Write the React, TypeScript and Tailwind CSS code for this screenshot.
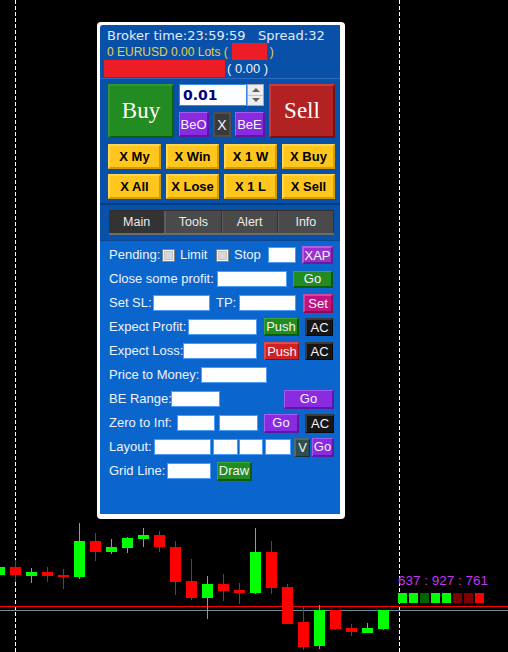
import React from "react";

type Candle = [number, number, number, number, number, "r" | "g"];

// body left, body top, body bottom, wick top, wick bottom, colour
const candles: Candle[] = [
  [-6, 567, 575, 560, 582, "g"],
  [10, 567, 575, 560, 582, "r"],
  [26, 572, 576, 568, 583, "g"],
  [42, 572, 576, 567, 582, "r"],
  [58, 575, 577, 569, 589, "r"],
  [74, 541, 577, 523, 579, "g"],
  [90, 541, 552, 533, 561, "r"],
  [106, 547, 552, 539, 554, "g"],
  [122, 538, 548, 537, 553, "g"],
  [138, 535, 539, 528, 547, "g"],
  [154, 535, 547, 531, 552, "r"],
  [170, 547, 582, 541, 595, "r"],
  [186, 581, 598, 559, 600, "r"],
  [202, 584, 598, 576, 619, "g"],
  [218, 584, 591, 574, 601, "r"],
  [234, 590, 593, 583, 604, "r"],
  [250, 552, 593, 528, 594, "g"],
  [266, 552, 588, 541, 594, "r"],
  [282, 587, 624, 584, 624, "r"],
  [298, 622, 647, 607, 650, "r"],
  [314, 610, 646, 605, 649, "g"],
  [330, 610, 629, 610, 630, "r"],
  [346, 628, 632, 624, 636, "r"],
  [362, 628, 633, 623, 633, "g"],
  [378, 610, 629, 610, 630, "g"],
];

const squares = ["#00ff00", "#00ff00", "#006400", "#00ff00", "#00ff00", "#800000", "#800000", "#ff0000"];

const Chart = () => (
  <svg className="absolute inset-0" width="508" height="652" viewBox="0 0 508 652">
    <line x1="15.5" y1="0" x2="15.5" y2="652" stroke="#fff" strokeDasharray="4 2" />
    <line x1="399.5" y1="0" x2="399.5" y2="652" stroke="#fff" strokeDasharray="4 2" />
    <line x1="0" y1="606.5" x2="508" y2="606.5" stroke="#ff0000" />
    <line x1="0" y1="610.5" x2="508" y2="610.5" stroke="#778899" />
    {candles.map(([x, bt, bb, wt, wb, c], i) => {
      const col = c === "g" ? "#00ff00" : "#ff0000";
      return (
        <g key={i}>
          <rect x={x + 5} y={wt} width="1" height={wb - wt} fill={col} />
          <rect x={x} y={bt} width="11" height={Math.max(bb - bt, 2)} fill={col} />
        </g>
      );
    })}
    {squares.map((c, i) => (
      <rect key={i} x={398 + i * 11} y="593" width="9" height="10" fill={c} />
    ))}
  </svg>
);

const Field = ({ w }: { w: string }) => (
  <div className={`h-[16px] shrink-0 bg-white border border-[#4d9cf6] ${w}`} />
);

const CheckBox = () => (
  <div className="w-[13px] h-[13px] shrink-0 border border-[#808080] bg-[#f4f4f4] p-[1px]">
    <div className="w-full h-full bg-[#d8d8d8] border border-[#c4c4c4]" />
  </div>
);

const green =
  "bg-[#228b22] border-t border-l border-t-[#3aa53a] border-l-[#3aa53a] border-b-2 border-r-2 border-b-[#0c5c0c] border-r-[#0c5c0c]";
const purple =
  "bg-[#8a2be2] border-t border-l border-t-[#a45cf0] border-l-[#a45cf0] border-b-2 border-r-2 border-b-[#5c18a0] border-r-[#5c18a0]";
const orchid =
  "bg-[#9932cc] border-t-2 border-l-2 border-t-[#b45ee0] border-l-[#b45ee0] border-b-2 border-r-2 border-b-[#6a1c94] border-r-[#6a1c94]";
const magenta =
  "bg-[#c0137e] border-t-2 border-l-2 border-t-[#d8449c] border-l-[#d8449c] border-b-2 border-r-2 border-b-[#880a58] border-r-[#880a58]";
const red =
  "bg-[#cf2323] border-t-2 border-l-2 border-t-[#e24a4a] border-l-[#e24a4a] border-b border-r border-b-[#8a1010] border-r-[#8a1010]";
const black =
  "bg-[#161616] border-t-2 border-l-2 border-t-[#3c3c3c] border-l-[#3c3c3c] border-b border-r border-b-[#0a0a0a] border-r-[#0a0a0a]";
const slate =
  "bg-[#2f4f4f] border-t-2 border-l-2 border-t-[#4d6b6b] border-l-[#4d6b6b] border-b border-r border-b-[#1a3030] border-r-[#1a3030]";
const yellow =
  "bg-[#ffc61e] border-t-2 border-l-2 border-t-[#ffd650] border-l-[#ffd650] border-b-2 border-r-2 border-b-[#d79c00] border-r-[#d79c00]";

const Btn = ({ cls, children }: { cls: string; children: React.ReactNode }) => (
  <div className={`shrink-0 flex items-center justify-center text-[13px] leading-none text-[#f4f4ff] ${cls}`}>
    {children}
  </div>
);

const Row = ({ children }: { children: React.ReactNode }) => (
  <div className="h-[24px] flex items-center pl-[9px]">{children}</div>
);

const Label = ({ w, children }: { w: string; children: React.ReactNode }) => (
  <span className={`shrink-0 whitespace-nowrap ${w}`}>{children}</span>
);

const yellowLabels = ["X My", "X Win", "X 1 W", "X Buy", "X All", "X Lose", "X 1 L", "X Sell"];
const tabs = ["Main", "Tools", "Alert", "Info"];

export default function App() {
  return (
    <div className="relative w-[508px] h-[652px] bg-black overflow-hidden font-['Liberation_Sans',Arial,sans-serif]">
      <Chart />
      <div className="absolute left-[398px] top-[573px] text-[13.5px] leading-[16px] text-[#c436f5] whitespace-pre">
        637 : 927 : 761
      </div>

      {/* panel */}
      <div className="absolute left-[97px] top-[22px] w-[248px] h-[497px] bg-white rounded-[4px] pl-[3px] pt-[3px] pr-[5px] pb-[5px] flex">
        <div className="flex-1 flex flex-col rounded-tl-[3px] overflow-hidden">
          <div className="bg-[#0850a8]">
            {/* header */}
            <div className="pt-[3px] pb-[1px] border-b border-[#2d6cbc]">
              <div className="pl-[7px] h-[15px] leading-[15px] text-[13px] font-['DejaVu_Sans',sans-serif] text-[#e2eafa] whitespace-pre">
                Broker time:23:59:59   Spread:32
              </div>
              <div className="pl-[7px] h-[17px] flex items-center text-[12px] text-[#e6d24a] whitespace-pre">
                <span>0 EURUSD 0.00 Lots (</span>
                <span className="ml-[4px] w-[35px] h-[17px] bg-[#ee1c25]" />
                <span className="ml-[3px]">)</span>
              </div>
              <div className="pl-[4px] h-[17px] flex items-center text-[13px] text-[#eef2ff] whitespace-pre">
                <span className="w-[121px] h-[17px] bg-[#ee1c25]" />
                <span className="ml-[2px]">( 0.00 )</span>
              </div>
            </div>

            {/* trade */}
            <div className="pt-[5px] pb-[4px] border-b-2 border-[#003c80]">
              <div className="flex pl-[8px]">
                <div className="w-[66px] h-[54px] flex items-center justify-center bg-[#228b22] border-2 border-t-[#2f9a2f] border-l-[#2f9a2f] border-b-[#0e5e0e] border-r-[#0e5e0e] text-white text-[23px] font-['Liberation_Serif',serif]">
                  Buy
                </div>
                <div className="ml-[5px] w-[86px] flex flex-col">
                  <div className="flex h-[22px]">
                    <div className="w-[68px] h-[22px] bg-white border border-[#3a88e6] flex items-center pl-[3px] text-[14px] font-bold text-[#000080] font-['DejaVu_Sans',sans-serif]">
                      0.01
                    </div>
                    <div className="w-[17px] h-[22px] flex flex-col bg-[#ededed] border border-[#a8a8a8]">
                      <div className="flex-1 flex items-center justify-center border-b border-[#c4c4c4]">
                        <div className="w-0 h-0 border-l-[4px] border-r-[4px] border-b-[4px] border-l-transparent border-r-transparent border-b-[#606060]" />
                      </div>
                      <div className="flex-1 flex items-center justify-center">
                        <div className="w-0 h-0 border-l-[4px] border-r-[4px] border-t-[4px] border-l-transparent border-r-transparent border-t-[#606060]" />
                      </div>
                    </div>
                  </div>
                  <div className="flex mt-[6px] h-[25px]">
                    <Btn cls={`w-[30px] h-[25px] ${purple}`}>BeO</Btn>
                    <Btn cls="ml-[4px] w-[18px] h-[25px] bg-[#3a3a3a] border-2 border-[#4e4e4e] text-[14px]">X</Btn>
                    <Btn cls={`ml-[4px] w-[30px] h-[25px] ${purple}`}>BeE</Btn>
                  </div>
                </div>
                <div className="ml-[4px] w-[66px] h-[54px] flex items-center justify-center bg-[#b22222] border-2 border-t-[#c93a3a] border-l-[#c93a3a] border-b-[#7c1010] border-r-[#7c1010] text-white text-[23px] font-['Liberation_Serif',serif]">
                  Sell
                </div>
              </div>
              <div className="mt-[6px] ml-[8px] w-[227px] grid grid-cols-4 gap-[5px]">
                {yellowLabels.map((l) => (
                  <div
                    key={l}
                    className={`h-[25px] flex items-center justify-center text-[13px] font-bold text-black whitespace-pre ${yellow}`}
                  >
                    {l}
                  </div>
                ))}
              </div>
            </div>

            {/* tabs */}
            <div className="pt-[5px] pb-[5px] border-b border-[#0a4590]">
              <div className="ml-[9px] w-[225px] h-[25px] grid grid-cols-4 border-t border-[#2e2e2e] border-b-2 border-b-[#6c6c6c]">
                {tabs.map((t, i) => (
                  <div
                    key={t}
                    className={`flex items-center justify-center text-[12.5px] text-[#ececec] border-r border-[#333] ${
                      i === 0 ? "bg-[#333333] border-r-[#5c5c5c]" : "bg-[#4a4a4a] border-l border-l-[#5e5e5e]"
                    }`}
                  >
                    {t}
                  </div>
                ))}
              </div>
            </div>
          </div>

          {/* main tab content */}
          <div className="flex-1 bg-[#0a66cc] pt-[2px] text-[13px] text-[#eef3ff]">
            <Row>
              <Label w="w-[53px]">Pending:</Label>
              <CheckBox />
              <Label w="ml-[5px] w-[36px]">Limit</Label>
              <CheckBox />
              <Label w="ml-[5px] w-[34px]">Stop</Label>
              <Field w="w-[28px]" />
              <Btn cls={`ml-[6px] w-[31px] h-[18px] ${orchid}`}>XAP</Btn>
            </Row>
            <Row>
              <Label w="w-[108px]">Close some profit:</Label>
              <Field w="w-[70px]" />
              <Btn cls={`ml-[6px] w-[40px] h-[17px] ${green}`}>Go</Btn>
            </Row>
            <Row>
              <Label w="w-[44px]">Set SL:</Label>
              <Field w="w-[57px]" />
              <Label w="ml-[6px] w-[23px]">TP:</Label>
              <Field w="w-[57px]" />
              <Btn cls={`ml-[7px] w-[30px] h-[19px] ${magenta}`}>Set</Btn>
            </Row>
            <Row>
              <Label w="w-[79px]">Expect Profit:</Label>
              <Field w="w-[69px]" />
              <Btn cls={`ml-[7px] w-[35px] h-[18px] ${green}`}>Push</Btn>
              <Btn cls={`ml-[6px] w-[28px] h-[18px] ${black}`}>AC</Btn>
            </Row>
            <Row>
              <Label w="w-[74px]">Expect Loss:</Label>
              <Field w="w-[74px]" />
              <Btn cls={`ml-[7px] w-[35px] h-[18px] ${red}`}>Push</Btn>
              <Btn cls={`ml-[6px] w-[28px] h-[18px] ${black}`}>AC</Btn>
            </Row>
            <Row>
              <Label w="w-[92px]">Price to Money:</Label>
              <Field w="w-[66px]" />
            </Row>
            <Row>
              <Label w="w-[62px]">BE Range:</Label>
              <Field w="w-[49px]" />
              <Btn cls={`ml-[64px] w-[50px] h-[19px] ${purple}`}>Go</Btn>
            </Row>
            <Row>
              <Label w="w-[68px]">Zero to Inf:</Label>
              <Field w="w-[38px]" />
              <Field w="ml-[4px] w-[39px]" />
              <Btn cls={`ml-[6px] w-[35px] h-[19px] ${purple}`}>Go</Btn>
              <Btn cls={`ml-[6px] w-[29px] h-[19px] ${black}`}>AC</Btn>
            </Row>
            <Row>
              <Label w="w-[45px]">Layout:</Label>
              <Field w="w-[57px]" />
              <Field w="ml-[2px] w-[25px]" />
              <Field w="ml-[1px] w-[24px]" />
              <Field w="ml-[2px] w-[26px]" />
              <Btn cls={`ml-[3px] w-[16px] h-[19px] ${slate}`}>V</Btn>
              <Btn cls={`ml-[2px] w-[22px] h-[19px] ${purple}`}>Go</Btn>
            </Row>
            <Row>
              <Label w="w-[58px]">Grid Line:</Label>
              <Field w="w-[44px]" />
              <Btn cls={`ml-[6px] w-[35px] h-[19px] ${green}`}>Draw</Btn>
            </Row>
          </div>
        </div>
      </div>
    </div>
  );
}
